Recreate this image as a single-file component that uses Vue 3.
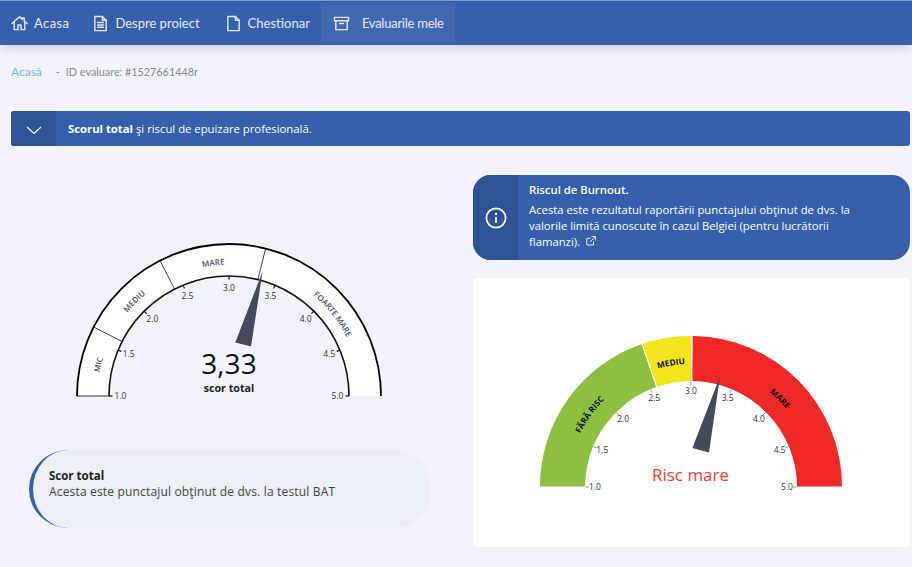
<script setup>
// value scale 1..5 maps to a half circle, left to right
const CX = 160
const CY = 155

function pt(val, r) {
  const a = ((val - 1) / 4) * Math.PI
  return [CX - r * Math.cos(a), CY - r * Math.sin(a)]
}
function arc(from, to, r) {
  const [x1, y1] = pt(from, r)
  const [x2, y2] = pt(to, r)
  return `M${x1} ${y1}A${r} ${r} 0 0 1 ${x2} ${y2}`
}
function band(from, to, r1, r2) {
  const [a, b] = pt(from, r2)
  const [c, d] = pt(to, r2)
  const [e, f] = pt(to, r1)
  const [g, h] = pt(from, r1)
  return `M${a} ${b}A${r2} ${r2} 0 0 1 ${c} ${d}L${e} ${f}A${r1} ${r1} 0 0 0 ${g} ${h}Z`
}
function line(val, r1, r2) {
  const [a, b] = pt(val, r1)
  const [c, d] = pt(val, r2)
  return `M${a} ${b}L${c} ${d}`
}

const ticks = [1, 1.5, 2, 2.5, 3, 3.5, 4, 4.5, 5]

const scoreLabels = [
  { id: 'sc-mic', text: 'MIC', from: 1, to: 1.6 },
  { id: 'sc-mediu', text: 'MEDIU', from: 1.6, to: 2.4 },
  { id: 'sc-mare', text: 'MARE', from: 2.4, to: 3.3 },
  { id: 'sc-foarte', text: 'FOARTE MARE', from: 3.3, to: 5 },
]
const riskBands = [
  { id: 'rk-fara', text: 'FĂRĂ RISC', from: 1, to: 2.58, color: '#8bc13f' },
  { id: 'rk-mediu', text: 'MEDIU', from: 2.58, to: 3.01, color: '#f3e41c' },
  { id: 'rk-mare', text: 'MARE', from: 3.01, to: 5, color: '#f12828' },
]

const navItems = [
  { label: 'Acasa', icon: 'home' },
  { label: 'Despre proiect', icon: 'doc' },
  { label: 'Chestionar', icon: 'blank' },
  { label: 'Evaluarile mele', icon: 'box', active: true },
]
</script>

<template>
  <div class="page">
    <nav class="nav">
      <a v-for="item in navItems" :key="item.label" class="nav-item" :class="{ active: item.active }">
        <svg class="nav-icon" viewBox="0 0 18 18" fill="none" stroke="currentColor" stroke-width="1.5" stroke-linejoin="round" stroke-linecap="round">
          <template v-if="item.icon === 'home'">
            <path d="M1 9 9 2l3 2.6V3h2v3.4L17 9" />
            <path d="M3.4 8v7.5h4v-5h3.2v5h4V8" />
          </template>
          <template v-else-if="item.icon === 'doc'">
            <path d="M3 1.5h8l4 4v11H3z" />
            <path d="M11 1.5v4h4M6 8h6M6 10.5h6M6 13h6" />
          </template>
          <template v-else-if="item.icon === 'blank'">
            <path d="M3 1.5h8l4 4v11H3z" />
            <path d="M11 1.5v4h4" />
          </template>
          <template v-else>
            <path d="M1.5 2.5h15v3.5h-15zM3 6v9.5h12V6M7 9h4" />
          </template>
        </svg>
        <span>{{ item.label }}</span>
      </a>
    </nav>

    <div class="crumbs">
      <span class="crumb-link">Acasă</span>
      <span class="crumb-text">-</span>
      <span class="crumb-text">ID evaluare: #1527661448r</span>
    </div>

    <div class="banner">
      <div class="banner-side">
        <svg width="16" height="9" viewBox="0 0 16 9" fill="none" stroke="#fff" stroke-width="1.2"><path d="M1 1l7 6.5L15 1" /></svg>
      </div>
      <div class="banner-text"><b>Scorul total</b> şi riscul de epuizare profesională.</div>
    </div>

    <div class="columns">
      <section class="col-left">
        <svg class="gauge" width="320" height="165" viewBox="0 0 320 165">
          <defs>
            <path v-for="l in scoreLabels" :key="l.id" :id="l.id" :d="arc(l.from, l.to, 131.5)" />
          </defs>
          <path :d="band(1, 5, 120, 152)" fill="#fff" />
          <path :d="line(1.6, 120, 152)" stroke="#444" stroke-width="1" />
          <path :d="line(2.4, 120, 152)" stroke="#444" stroke-width="1" />
          <path :d="line(3.31, 120, 152)" stroke="#444" stroke-width="1" />
          <path d="M8 155H41" stroke="#777" stroke-width="1.5" />
          <path :d="arc(1, 5, 152)" fill="none" stroke="#000" stroke-width="1.8" />
          <path :d="arc(1, 5, 120)" fill="none" stroke="#111" stroke-width="1.6" />
          <path v-for="t in ticks" :key="t" :d="line(t, 120, 116.5)" stroke="#111" stroke-width="1.2" />
          <text v-for="t in ticks" :key="'l' + t" class="tick" :x="pt(t, 108.5)[0]" :y="pt(t, 108.5)[1]" dy="3">{{ t.toFixed(1) }}</text>
          <text v-for="l in scoreLabels" :key="'t' + l.id" class="band-label score">
            <textPath :href="'#' + l.id" startOffset="50%">{{ l.text }}</textPath>
          </text>
          <polygon points="193.6,30.3 166.3,101.6 182,105.6" fill="#454a5a" />
          <text class="score-value" x="160" y="132.5">3,33</text>
          <text class="score-caption" x="160" y="151">scor total</text>
        </svg>

        <div class="callout">
          <div class="callout-title">Scor total</div>
          <div class="callout-body">Acesta este punctajul obţinut de dvs. la testul BAT</div>
        </div>
      </section>

      <section class="col-right">
        <div class="info">
          <div class="info-side">
            <svg width="22" height="22" viewBox="0 0 22 22" fill="none" stroke="#fff">
              <circle cx="11" cy="11" r="9.6" stroke-width="1.8" />
              <circle cx="11" cy="7" r="1.2" fill="#fff" stroke="none" />
              <path d="M11 10v6" stroke-width="2" />
            </svg>
          </div>
          <div class="info-text">
            <div class="info-title">Riscul de Burnout.</div>
            <p>
              Acesta este rezultatul raportării punctajului obţinut de dvs. la valorile limită cunoscute în cazul Belgiei (pentru lucrătorii flamanzi).
              <svg class="ext" width="10" height="10" viewBox="0 0 10 10" fill="none" stroke="#fff" stroke-width=".9">
                <path d="M7.5 5.5v3.5H.8V2.3h3.7M5.5.6h3.900v3.900M9.400.6 4 6" />
              </svg>
            </p>
          </div>
        </div>

        <div class="card">
          <svg class="gauge" width="320" height="165" viewBox="0 0 320 165">
            <defs>
              <path v-for="b in riskBands" :key="b.id" :id="b.id" :d="arc(b.from, b.to, 123)" />
            </defs>
            <path v-for="b in riskBands" :key="'b' + b.id" :d="band(b.from, b.to, 105.5, 151.6)" :fill="b.color" stroke="#fff" stroke-width="1" />
            <path v-for="t in ticks" :key="t" :d="line(t, 105.5, 102)" stroke="#999" stroke-width="1" />
            <text v-for="t in ticks" :key="'l' + t" class="tick" :x="pt(t, 96)[0]" :y="pt(t, 96)[1]" dy="3">{{ t.toFixed(1) }}</text>
            <text v-for="b in riskBands" :key="'t' + b.id" class="band-label risk">
              <textPath :href="'#' + b.id" startOffset="50%">{{ b.text }}</textPath>
            </text>
            <polygon points="189,44.4 161.4,116 178,120.4" fill="#454a5a" />
            <text class="risk-value" x="159.500" y="149">Risc mare</text>
          </svg>
        </div>
      </section>
    </div>
  </div>
</template>

<style scoped>
.page {
  width: 912px;
  height: 567px;
  overflow: hidden;
  background: #f3f4fb;
  font-family: "Open Sans", "Liberation Sans", sans-serif;
  color: #333;
}
.nav {
  height: 44px;
  border-top: 1px solid #7d9ccf;
  background: #3660ad;
  display: flex;
  align-items: center;
  padding-left: 2px;
  box-shadow: 0 2px 10px rgba(40, 50, 80, .22);
  position: relative;
}
.nav-item {
  display: flex;
  align-items: center;
  gap: 6px;
  height: 36px;
  padding: 0 10px 0 9px;
  margin-right: 6px;
  color: #e4eaf5;
  font-family: Lato, "Open Sans", sans-serif;
  font-size: 13px;
}
.nav-item:first-child span { letter-spacing: .4px; }
.nav-item:first-child { padding-right: 8px; }
.nav-item.active {
  background: #4169b2;
  padding: 0 11px 0 12px;
  margin-left: -5px;
  gap: 12px;
  letter-spacing: -.25px;
}
.nav-icon { width: 17px; height: 17px; }
.crumbs {
  height: 66px;
  padding: 20px 0 0 11px;
  box-sizing: border-box;
  font-family: Lato, "Open Sans", sans-serif;
  display: flex;
  gap: 6px;
  line-height: 14px;
}
.crumb-link { color: #7fb0ea; font-size: 12px; margin-right: 8px; }
.crumb-text { color: #8a8a8a; font-size: 10.800px; }
.banner {
  margin: 0 2px 0 11px;
  height: 35px;
  display: flex;
  background: #3660ad;
  border-radius: 3px;
  overflow: hidden;
  color: #fff;
}
.banner-side {
  width: 45px;
  flex-shrink: 0;
  background: #2f5496;
  display: flex;
  align-items: center;
  justify-content: center;
  padding-top: 3px;
  box-sizing: border-box;
}
.banner-text {
  padding-left: 12px;
  font-size: 11.300px;
  line-height: 35px;
}
.columns {
  display: grid;
  grid-template-columns: 462px 437px;
  padding-left: 11px;
}
.col-left { padding-top: 95px; }
.gauge { display: block; }
.col-left .gauge { margin-left: 58px; }
.callout {
  margin: 44px 0 0 18px;
  width: 402px;
  height: 78px;
  box-sizing: border-box;
  background: #eceef8;
  border-left: 4px solid #3660ad;
  border-radius: 39px;
  padding: 18px 0 0 16px;
  font-size: 12px;
  line-height: 15px;
}
.callout-title { font-weight: 700; color: #222; font-size: 11.500px; margin-bottom: 1px; }
.callout-body { color: #444; letter-spacing: .17px; }
.col-right { padding-top: 29px; }
.info {
  height: 85px;
  display: flex;
  background: #3660ad;
  border-radius: 18px;
  overflow: hidden;
  color: #fff;
}
.info-side {
  width: 45px;
  flex-shrink: 0;
  background: #2f5496;
  display: flex;
  align-items: center;
  justify-content: center;
}
.info-text {
  padding: 7px 45px 0 11px;
  font-size: 11.300px;
  line-height: 16px;
}
.info-title { font-weight: 600; margin-bottom: 4px; }
.info-text p { margin: 0; }
.ext { margin-left: 3px; }
.card {
  margin-top: 18px;
  height: 269px;
  box-sizing: border-box;
  background: #fff;
  border-radius: 4px;
  padding: 54px 0 0 57.500px;
}
.tick {
  font-family: "Open Sans", sans-serif;
  font-size: 8.500px;
  text-anchor: middle;
  fill: #333;
}
.band-label {
  font-family: "Open Sans", sans-serif;
  font-size: 8px;
  font-weight: 600;
  text-anchor: middle;
}
.band-label.score { fill: #4a4f63; }
.band-label.risk { fill: #111; font-weight: 700; font-size: 8.300px; }
.score-value {
  font-family: "Open Sans", sans-serif;
  font-size: 28px;
  text-anchor: middle;
  fill: #111;
}
.score-caption {
  font-family: "Open Sans", sans-serif;
  font-size: 10.700px;
  font-weight: 700;
  text-anchor: middle;
  fill: #222;
}
.risk-value {
  font-family: "Open Sans", sans-serif;
  font-size: 17px;
  text-anchor: middle;
  fill: #f23a3a;
}
</style>
